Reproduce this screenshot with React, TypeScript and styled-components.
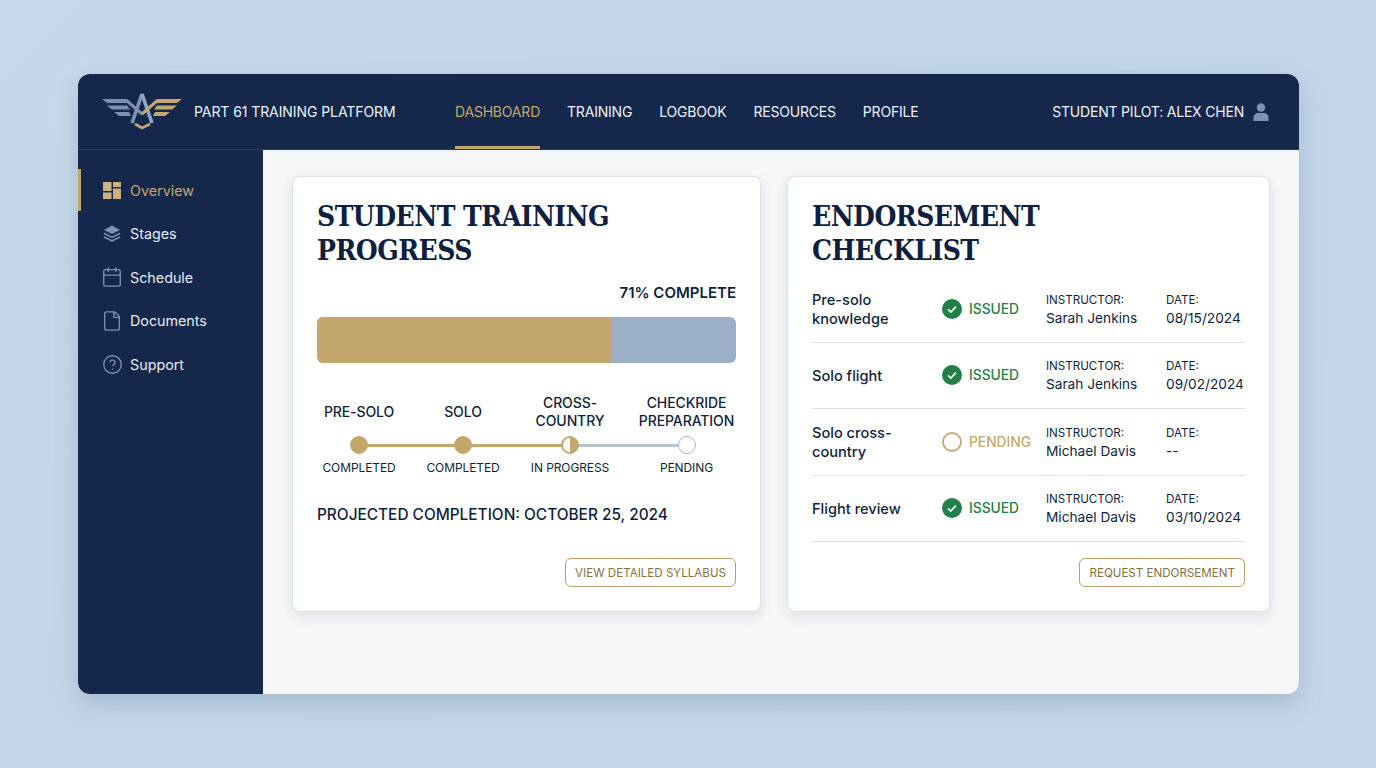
import React from "react";
import styled, {createGlobalStyle} from "styled-components";
import {Calendar, CircleHelp, File} from "lucide-react";

const navy = "#15284b",
    ink = "#0f1f3d",
    gold = "#c4a76c",
    steel = "#7a92b4";

const GlobalStyle = createGlobalStyle`
    html, body {
        margin: 0;
        height: 768px;
        overflow: hidden;
    }
    body {
        font-family: Inter, "Liberation Sans", sans-serif;
        background: linear-gradient(135deg, #c6d8ea 0%, #c2d5e9 50%, #c4d7ea 100%);
    }
`,

    Page = styled.div`
        box-sizing: border-box;
        height: 768px;
        padding: 74px 77px 74px 78px;
`,

    Shell = styled.div`
        height: 620px;
        border-radius: 12px;
        overflow: hidden;
        display: grid;
        grid-template-rows: 76px 1fr;
        background: #f4f6f8;
        box-shadow: 0 10px 24px rgba(60, 85, 120, 0.22);
`,

    Header = styled.header`
        background: ${navy};
        display: flex;
        align-items: center;
        padding: 0 30px 0 24px;
        border-bottom: 1px solid #2a3c5e;
        box-sizing: border-box;
`,

    Brand = styled.div`
        display: flex;
        align-items: center;
        gap: 12px;
        width: 353px;
        color: #eef2f7;
        font-size: 14px;
        letter-spacing: -0.08px;
`,

    TopNav = styled.nav`
        display: flex;
        gap: 27px;
        height: 100%;
        flex: 1;
`,

    TopLink = styled.a<{$active?: boolean}>`
        display: flex;
        align-items: center;
        box-sizing: border-box;
        height: 100%;
        font-size: 14px;
        letter-spacing: -0.2px;
        color: ${(p) => p.$active ? gold : "#eef2f7"};
        border-bottom: 3px solid ${(p) => p.$active ? gold : "transparent"};
        border-top: 3px solid transparent;
`,

    User = styled.div`
        display: flex;
        align-items: center;
        gap: 9px;
        color: #eef2f7;
        font-size: 14px;
        letter-spacing: -0.2px;
`,

    Body = styled.div`
        display: grid;
        grid-template-columns: 185px 1fr;
        min-height: 0;
`,

    Side = styled.aside`
        background: ${navy};
        padding-top: 19px;
        display: flex;
        flex-direction: column;
        gap: 1.5px;
`,

    SideLink = styled.a<{$active?: boolean}>`
        display: flex;
        align-items: center;
        gap: 9px;
        height: 42px;
        padding-left: 22px;
        font-size: 14.3px;
        color: ${(p) => p.$active ? gold : "#e6ebf3"};
        border-left: 3px solid ${(p) => p.$active ? gold : "transparent"};
`,

    SideIcon = styled.span`
        width: 18px;
        display: flex;
        justify-content: center;

        svg {
            flex: none;
        }
`,

    Main = styled.main`
        display: grid;
        grid-template-columns: 469px 483px;
        gap: 26px;
        padding: 26px 29px 82px;
        align-items: stretch;
`,

    Card = styled.section`
        box-sizing: border-box;
        background: #fff;
        border: 1px solid #dfe3e8;
        border-radius: 8px;
        padding: 23px 24px 24px;
        display: flex;
        flex-direction: column;
        box-shadow: 0 4px 12px rgba(60, 80, 110, 0.12);
`,

    Title = styled.h2`
        margin: 0;
        font-family: "DejaVu Serif Condensed", "DejaVu Serif", "Liberation Serif", serif;
        font-stretch: condensed;
        font-weight: 700;
        font-size: 28px;
        line-height: 34px;
        letter-spacing: -0.55px;
        color: ${ink};
`,

    Percent = styled.div`
        margin-top: 13px;
        text-align: right;
        font-size: 15px;
        font-weight: 600;
        line-height: 24px;
        color: ${ink};
`,

    Track = styled.div`
        margin-top: 12px;
        height: 46px;
        border-radius: 6px;
        background: #9bb0c7;
        overflow: hidden;
`,

    Fill = styled.div<{$percent: number}>`
        width: ${(p) => p.$percent}%;
        height: 100%;
        background: ${gold};
`,

    Stages = styled.div`
        margin-top: 31px;
        display: grid;
        grid-template-columns: 84px 124px 90px 121px;
`,

    Stage = styled.div<{$last?: boolean}>`
        display: flex;
        flex-direction: column;
        align-items: center;
        text-align: center;
        padding-left: ${(p) => p.$last ? "22px" : "0"};
`,

    StageName = styled.div`
        height: 36px;
        display: flex;
        align-items: center;
        font-size: 14px;
        font-weight: 500;
        line-height: 18px;
        letter-spacing: -0.1px;
        color: ${ink};
        white-space: pre-line;
`,

    DotRow = styled.div`
        position: relative;
        height: 18px;
        margin: 6px 0 6px;
        display: flex;
        align-items: center;
        justify-content: center;
        width: 100%;
`,

    Link = styled.span<{$pending?: boolean; $width: number}>`
        position: absolute;
        left: 50%;
        top: 8px;
        height: 2.5px;
        width: ${(p) => p.$width}px;
        background: ${(p) => p.$pending ? "#b5c2d1" : gold};
`,

    Dot = styled.span<{$state: string}>`
        position: relative;
        box-sizing: border-box;
        width: 18px;
        height: 18px;
        border-radius: 50%;
        border: ${(p) => p.$state === "pending" ? "1.5px solid #aab8c8" : `2px solid ${gold}`};
        background: ${(p) => p.$state === "done"
        ? gold
        : p.$state === "half"
            ? `linear-gradient(90deg, #fff 50%, ${gold} 50%)`
            : "#fff"};
`,

    StageState = styled.div`
        font-size: 12px;
        line-height: 16px;
        letter-spacing: -0.1px;
        color: ${ink};
`,

    Projected = styled.div`
        margin-top: 28px;
        font-size: 15.4px;
        font-weight: 500;
        line-height: 22px;
        color: ${ink};
`,

    Actions = styled.div`
        margin-top: auto;
        display: flex;
        justify-content: flex-end;
`,

    OutlineButton = styled.button`
        height: 29px;
        padding: 0 9px;
        background: #fff;
        border: 1px solid #b5a06e;
        border-radius: 6px;
        font-family: inherit;
        font-size: 11.6px;
        color: #84713f;
`,

    Rows = styled.div`
        margin-top: 8px;
`,

    Row = styled.div`
        box-sizing: border-box;
        display: grid;
        grid-template-columns: 130px 104px 120px 1fr;
        align-items: center;
        height: 66.5px;
        border-bottom: 1px solid #dde1e6;
`,

    Name = styled.div`
        padding-top: 2px;
        font-size: 14.6px;
        font-weight: 500;
        line-height: 19px;
        color: ${ink};
        white-space: pre-line;
`,

    Status = styled.div<{$pending?: boolean}>`
        display: flex;
        align-items: center;
        gap: 7px;
        font-size: 13.8px;
        font-weight: 500;
        color: ${(p) => p.$pending ? gold : "#1f8048"};
`,

    Meta = styled.div`
        color: ${ink};
        font-size: 13.7px;
        line-height: 18px;
`,

    MetaLabel = styled.div`
        font-size: 11.6px;
        line-height: 18px;
`;

const Logo = () => (
    <svg width="80" height="38" viewBox="0 0 80 38" fill="none">
        <path d="M0 6H24L27.5 10H5Z" fill={steel} />
        <path d="M5 12.5H25L28 16.5H10Z" fill={steel} />
        <path d="M12 19H27L29 23H17Z" fill={steel} />
        <path d="M80 6H56L52.5 10H75Z" fill={gold} />
        <path d="M75 12.5H55L52 16.5H70Z" fill={gold} />
        <path d="M68 19H53L51 23H63Z" fill={gold} />
        <path d="M40 1L30 30" stroke={steel} strokeWidth="3.6" />
        <path d="M40 1L50 30" stroke="#8fa5c2" strokeWidth="3.6" />
        <path d="M24 7L40 21" stroke={steel} strokeWidth="3" />
        <path d="M56 7L40 21" stroke={gold} strokeWidth="3" />
        <path d="M33 31L40 35L48 31" stroke={gold} strokeWidth="2.8" />
    </svg>
);

const OverviewIcon = () => (
    <svg width="18" height="17" viewBox="0 0 18 17" fill="#cdb37e">
        <rect width="8.5" height="9" />
        <rect x="10" width="8" height="5" />
        <rect y="10.5" width="8.5" height="6.5" />
        <rect x="10" y="6.5" width="8" height="10.5" />
    </svg>
);

const StagesIcon = () => (
    <svg width="18" height="17" viewBox="0 0 18 17" fill="none">
        <path d="M9 0.5L17 5L9 9L1 5Z" fill={steel} />
        <path d="M1 8.5L9 12.5L17 8.5" stroke={steel} strokeWidth="1.4" />
        <path d="M1 12L9 16L17 12" stroke={steel} strokeWidth="1.4" />
    </svg>
);

const UserIcon = () => (
    <svg width="16" height="18" viewBox="0 0 16 18" fill={steel}>
        <circle cx="8" cy="4.5" r="4.2" />
        <path d="M0.5 18V14.5C0.5 11.5 3 10 5 10H11C13 10 15.5 11.5 15.5 14.5V18Z" />
    </svg>
);

const CheckIcon = () => (
    <svg width="20" height="20" viewBox="0 0 20 20">
        <circle cx="10" cy="10" r="10" fill="#1f8048" />
        <path d="M6 10.3L8.8 13L14 7.6" fill="none" stroke="#fff" strokeWidth="1.6" />
    </svg>
);

const RingIcon = () => (
    <svg width="20" height="20" viewBox="0 0 20 20">
        <circle cx="10" cy="10" r="9" fill="none" stroke={gold} strokeWidth="1.8" />
    </svg>
);

const topLinks = ["DASHBOARD", "TRAINING", "LOGBOOK", "RESOURCES", "PROFILE"];

const sideLinks = [
    {label: "Overview", icon: <OverviewIcon />},
    {label: "Stages", icon: <StagesIcon />},
    {label: "Schedule", icon: <Calendar size={22} color={steel} strokeWidth={1.5} />},
    {label: "Documents", icon: <File size={22} color={steel} strokeWidth={1.5} />},
    {label: "Support", icon: <CircleHelp size={21} color={steel} strokeWidth={1.5} />}
];

const stages = [
    {name: "PRE-SOLO", status: "COMPLETED", state: "done", link: 105, pending: false},
    {name: "SOLO", status: "COMPLETED", state: "done", link: 107, pending: false},
    {name: "CROSS-\nCOUNTRY", status: "IN PROGRESS", state: "half", link: 116, pending: true},
    {name: "CHECKRIDE\nPREPARATION", status: "PENDING", state: "pending", link: 0, pending: true}
];

const endorsements = [
    {name: "Pre-solo\nknowledge", pending: false, instructor: "Sarah Jenkins", date: "08/15/2024"},
    {name: "Solo flight", pending: false, instructor: "Sarah Jenkins", date: "09/02/2024"},
    {name: "Solo cross-\ncountry", pending: true, instructor: "Michael Davis", date: "--"},
    {name: "Flight review", pending: false, instructor: "Michael Davis", date: "03/10/2024"}
];

export default function App () {

    return (
        <Page>
            <GlobalStyle />
            <Shell>
                <Header>
                    <Brand>
                        <Logo />
                        PART 61 TRAINING PLATFORM
                    </Brand>
                    <TopNav>
                        {topLinks.map((link, i) => (
                            <TopLink key={link} $active={i === 0}>
                                {link}
                            </TopLink>
                        ))}
                    </TopNav>
                    <User>
                        STUDENT PILOT: ALEX CHEN
                        <UserIcon />
                    </User>
                </Header>
                <Body>
                    <Side>
                        {sideLinks.map((link, i) => (
                            <SideLink key={link.label} $active={i === 0}>
                                <SideIcon>
                                    {link.icon}
                                </SideIcon>
                                {link.label}
                            </SideLink>
                        ))}
                    </Side>
                    <Main>
                        <Card>
                            <Title>
                                STUDENT TRAINING
                                <br />
                                PROGRESS
                            </Title>
                            <Percent>
                                71% COMPLETE
                            </Percent>
                            <Track>
                                <Fill $percent={70.2} />
                            </Track>
                            <Stages>
                                {stages.map((stage) => (
                                    <Stage key={stage.name} $last={stage.link === 0}>
                                        <StageName>
                                            {stage.name}
                                        </StageName>
                                        <DotRow>
                                            {stage.link > 0 && <Link $pending={stage.pending} $width={stage.link} />}
                                            <Dot $state={stage.state} />
                                        </DotRow>
                                        <StageState>
                                            {stage.status}
                                        </StageState>
                                    </Stage>
                                ))}
                            </Stages>
                            <Projected>
                                PROJECTED COMPLETION: OCTOBER 25, 2024
                            </Projected>
                            <Actions>
                                <OutlineButton>
                                    VIEW DETAILED SYLLABUS
                                </OutlineButton>
                            </Actions>
                        </Card>
                        <Card>
                            <Title>
                                ENDORSEMENT
                                <br />
                                CHECKLIST
                            </Title>
                            <Rows>
                                {endorsements.map((row) => (
                                    <Row key={row.name}>
                                        <Name>
                                            {row.name}
                                        </Name>
                                        <Status $pending={row.pending}>
                                            {row.pending ? <RingIcon /> : <CheckIcon />}
                                            {row.pending ? "PENDING" : "ISSUED"}
                                        </Status>
                                        <Meta>
                                            <MetaLabel>
                                                INSTRUCTOR:
                                            </MetaLabel>
                                            {row.instructor}
                                        </Meta>
                                        <Meta>
                                            <MetaLabel>
                                                DATE:
                                            </MetaLabel>
                                            {row.date}
                                        </Meta>
                                    </Row>
                                ))}
                            </Rows>
                            <Actions>
                                <OutlineButton>
                                    REQUEST ENDORSEMENT
                                </OutlineButton>
                            </Actions>
                        </Card>
                    </Main>
                </Body>
            </Shell>
        </Page>
    );

}
